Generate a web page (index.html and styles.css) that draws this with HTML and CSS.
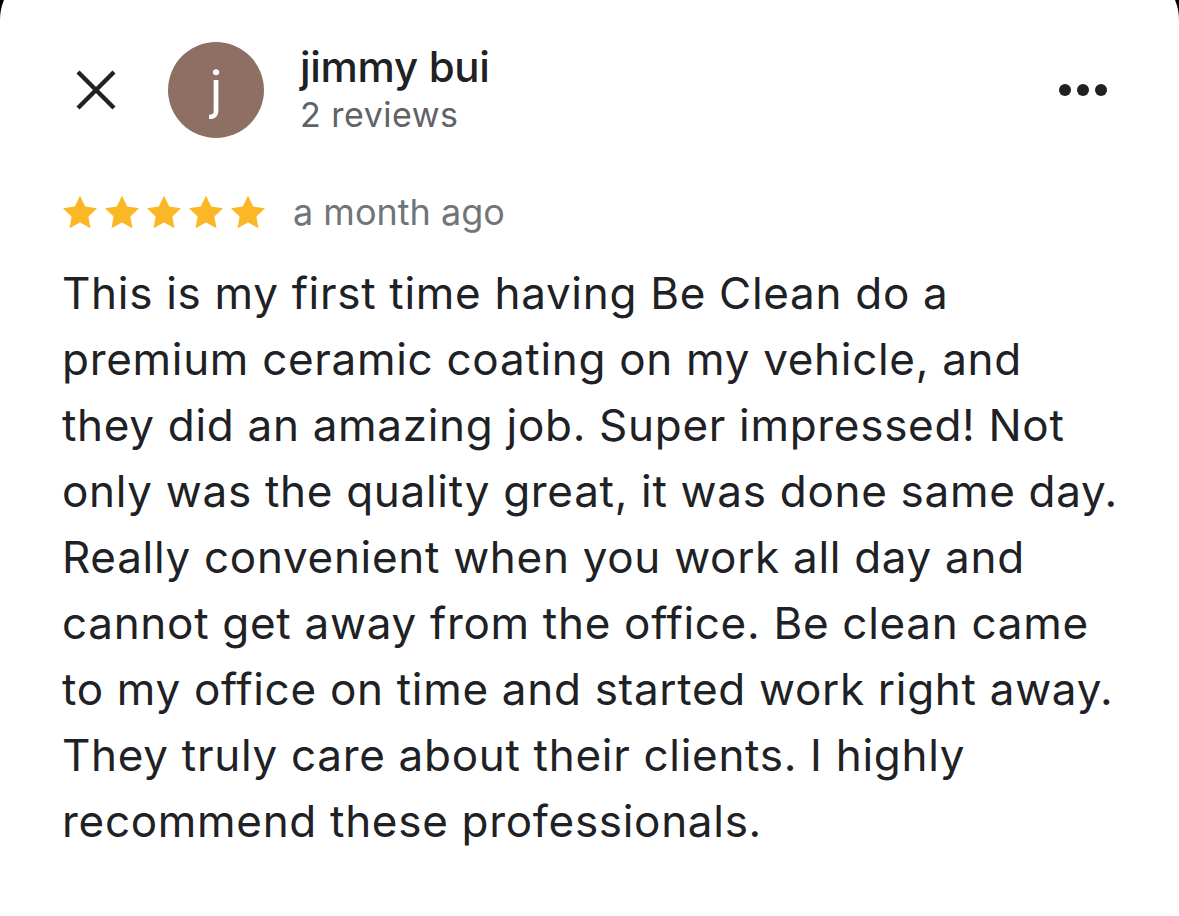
FILE: index.html
```html
<!DOCTYPE html>
<html lang="en">
<head>
<meta charset="utf-8">
<title>Review</title>
<link rel="stylesheet" href="styles.css">
</head>
<body>
<div class="card">
  <div class="header">
    <button class="close" aria-label="Close">
      <svg viewBox="0 0 42 42" width="42" height="42"><path d="M3 3 L39 39 M39 3 L3 39" stroke="#202124" stroke-width="4.4" fill="none"/></svg>
    </button>
    <div class="avatar">j</div>
    <div class="who">
      <div class="name">jimmy bui</div>
      <div class="count">2 reviews</div>
    </div>
    <div class="more" aria-label="More">
      <span class="dot"></span><span class="dot"></span><span class="dot"></span>
    </div>
  </div>
  <div class="meta">
    <div class="stars">
      <svg viewBox="0 0 24 24" width="34" height="34"><path d="M12 .6l3.67 7.57 8.33 1.15-6.06 5.83 1.48 8.28L12 19.46l-7.42 3.970 1.48-8.28L0 9.32l8.33-1.15z" fill="#fbb726"/></svg>
      <svg viewBox="0 0 24 24" width="34" height="34"><path d="M12 .6l3.67 7.57 8.33 1.15-6.06 5.83 1.48 8.28L12 19.46l-7.42 3.97 1.48-8.28L0 9.32l8.33-1.15z" fill="#fbb726"/></svg>
      <svg viewBox="0 0 24 24" width="34" height="34"><path d="M12 .6l3.67 7.57 8.33 1.15-6.06 5.83 1.48 8.28L12 19.46l-7.42 3.97 1.48-8.28L0 9.32l8.33-1.15z" fill="#fbb726"/></svg>
      <svg viewBox="0 0 24 24" width="34" height="34"><path d="M12 .6l3.67 7.57 8.33 1.15-6.06 5.83 1.48 8.28L12 19.46l-7.42 3.97 1.48-8.28L0 9.32l8.33-1.15z" fill="#fbb726"/></svg>
      <svg viewBox="0 0 24 24" width="34" height="34"><path d="M12 .6l3.67 7.57 8.33 1.15-6.06 5.83 1.48 8.28L12 19.46l-7.42 3.97 1.48-8.28L0 9.32l8.33-1.15z" fill="#fbb726"/></svg>
    </div>
    <span class="when">a month ago</span>
  </div>
  <p class="text">This is my first time having Be Clean do a<br>premium ceramic coating on my vehicle, and<br>they did an amazing job. Super impressed! Not<br>only was the quality great, it was done same day.<br>Really convenient when you work all day and<br>cannot get away from the office. Be clean came<br>to my office on time and started work right away.<br>They truly care about their clients. I highly<br>recommend these professionals.</p>
</div>
</body>
</html>
```
FILE: styles.css
```css
html, body {
  margin: 0;
  background: #000;
}
body {
  font-family: Inter, "Noto Sans", sans-serif;
  color: #202124;
  height: 916px;
  overflow: hidden;
}
.card {
  background: #fff;
  margin-top: -32px;
  border-radius: 52px 52px 0 0;
  height: 948px;
  padding: 74px 72px 0 62px;
  box-sizing: border-box;
}
.header {
  display: flex;
  align-items: center;
  height: 96px;
}
.close {
  border: 0;
  background: none;
  padding: 0;
  margin-left: 13px;
  width: 42px;
  height: 42px;
  display: flex;
}
.avatar {
  margin-left: 51px;
  width: 96px;
  height: 96px;
  border-radius: 50%;
  background: #8e6f64;
  color: #fff;
  font-size: 52px;
  line-height: 96px;
  text-align: center;
  flex-shrink: 0;
}
.who {
  margin-left: 36px;
  display: flex;
  flex-direction: column;
}
.name {
  font-size: 42px;
  font-weight: 500;
  line-height: 46px;
  letter-spacing: -0.3px;
}
.count {
  font-size: 34px;
  line-height: 44px;
  margin-top: 3px;
  letter-spacing: 0.5px;
  color: #5f6368;
}
.more {
  margin-left: auto;
  display: flex;
  gap: 6px;
}
.dot {
  width: 12px;
  height: 12px;
  border-radius: 50%;
  background: #202124;
}
.meta {
  display: flex;
  align-items: center;
  margin-top: 56px;
  height: 35px;
}
.stars {
  display: flex;
  gap: 8px;
  margin-left: 1px;
}
.stars svg {
  display: block;
}
.when {
  margin-left: 28px;
  font-size: 36px;
  color: #70757a;
}
.text {
  margin: 31px -60px 0 0;
  font-size: 44px;
  line-height: 66px;
  letter-spacing: 0.7px;
  white-space: nowrap;
}
```
